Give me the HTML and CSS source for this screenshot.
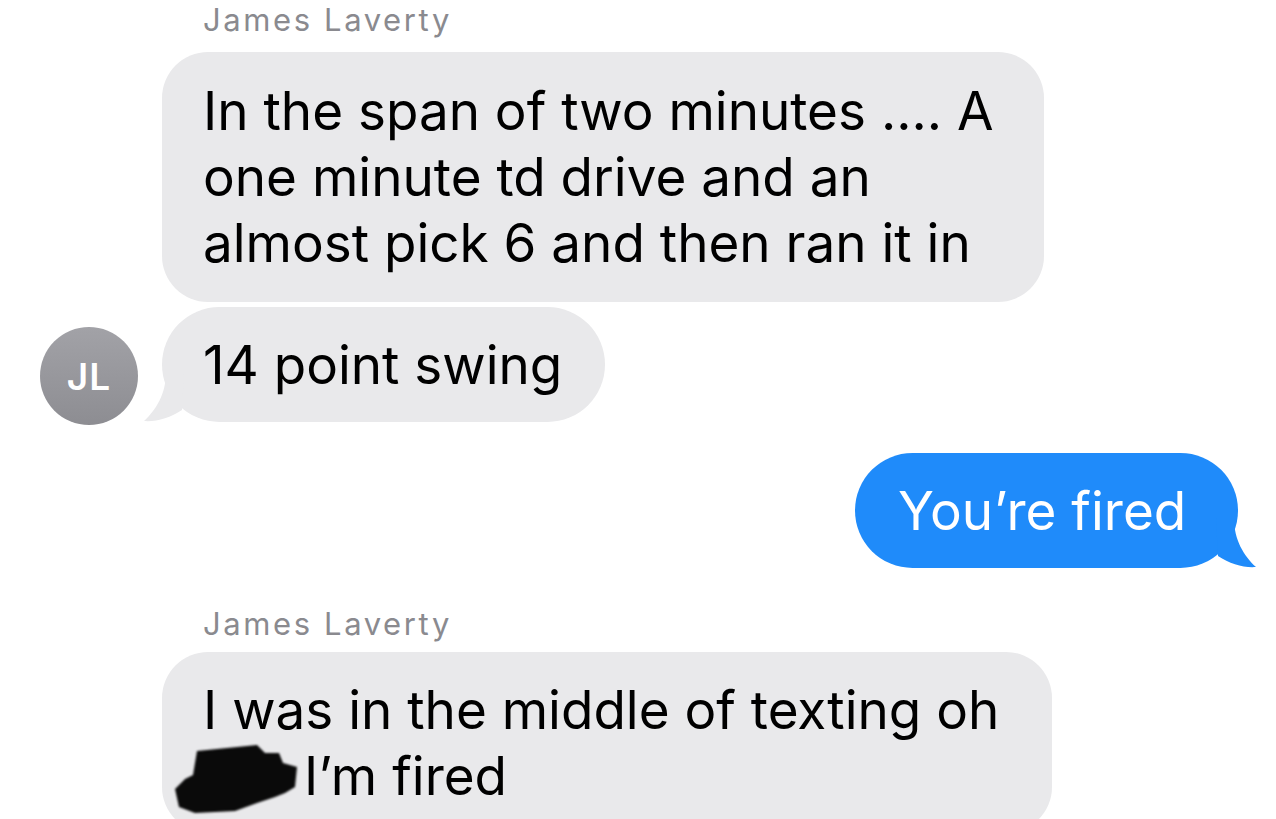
FILE: index.html
```html
<!DOCTYPE html>
<html>
	<head>
		<title>Messages</title>
		<link rel="stylesheet" href="styles.css">
	</head>
	<body>
	<div class="thread">
		<div class="name">James Laverty</div>
		<div class="row">
			<div class="bubble in b1">In the span of two minutes .... A<br>one minute td drive and an<br>almost pick 6 and then ran it in</div>
		</div>
		<div class="row tight">
			<div class="avatar">JL</div>
			<div class="bubble in tail b2">14 point swing
				<svg class="tail-in" width="40" height="50" viewBox="0 0 40 50"><path d="M22 0 C22 22 12 38 0 49 C12 50 26 46 38 38 L40 0 Z" fill="#e9e9eb"/></svg>
			</div>
		</div>
		<div class="row out">
			<div class="bubble me b3">You’re fired
				<svg class="tail-out" width="40" height="50" viewBox="0 0 40 50"><path d="M18 0 C18 22 28 38 40 49 C28 50 14 46 2 38 L0 0 Z" fill="#1f8bfa"/></svg>
			</div>
		</div>
		<div class="name second">James Laverty</div>
		<div class="row">
			<div class="bubble in b4">I was in the middle of texting oh<br><span class="redact"><svg class="blob" width="126" height="74" viewBox="0 0 126 74"><path d="M22 10 L82 4 L90 12 L104 12 L108 22 L122 26 L120 46 L110 52 L100 56 L82 62 L60 70 L20 72 L4 66 L0 48 L10 38 L18 34 Z" fill="#0a0a0a"/></svg></span> I’m fired</div>
		</div>
	</div>
	</body>
</html>
```

FILE: styles.css
```css
body {
	margin: 0;
	background: #fff;
	font-family: Inter, "Noto Sans", sans-serif;
	overflow: hidden;
}
.thread {
	padding: 2px 0 0 40px;
	display: flex;
	flex-direction: column;
}
.name {
	margin-left: 163px;
	font-size: 31px;
	letter-spacing: 2.6px;
	line-height: 36px;
	color: #8a8a8f;
	margin-bottom: 14px;
}
.name.second {
	margin-top: 38px;
	margin-bottom: 10px;
}
.row {
	display: flex;
	align-items: center;
	gap: 24px;
	padding-left: 122px;
}
.row.tight {
	padding-left: 0;
	margin-top: 5px;
	align-items: flex-end;
}
.row.out {
	justify-content: flex-end;
	padding-right: 38px;
	margin-top: 31px;
}
.bubble {
	position: relative;
	box-sizing: border-box;
	font-size: 53px;
	line-height: 66px;
	padding: 25px 0 24px 41px;
	border-radius: 46px;
	white-space: nowrap;
}
.in {
	background: #e9e9eb;
	color: #000;
}
.me {
	background: #1f8bfa;
	color: #fff;
	padding-left: 43px;
	border-radius: 58px;
}
.b1 { width: 882px; padding-top: 26px; padding-bottom: 26px; }
.b2 { width: 443px; border-radius: 58px; }
.b3 { width: 383px; }
.b4 { width: 890px; }
.avatar {
	width: 98px;
	height: 98px;
	border-radius: 50%;
	background: linear-gradient(#a2a2a7, #8d8d92);
	color: #fff;
	font-size: 37px;
	font-weight: 600;
	letter-spacing: 1px;
	display: flex;
	align-items: center;
	justify-content: center;
	margin-bottom: -3px;
}
.tail-in {
	position: absolute;
	left: -18px;
	bottom: 0;
}
.tail-out {
	position: absolute;
	right: -18px;
	bottom: 0;
}
.redact {
	position: relative;
	display: inline-block;
	width: 86px;
	height: 40px;
}
.blob {
	position: absolute;
	left: -28px;
	top: -14px;
	filter: blur(1px);
}
```
